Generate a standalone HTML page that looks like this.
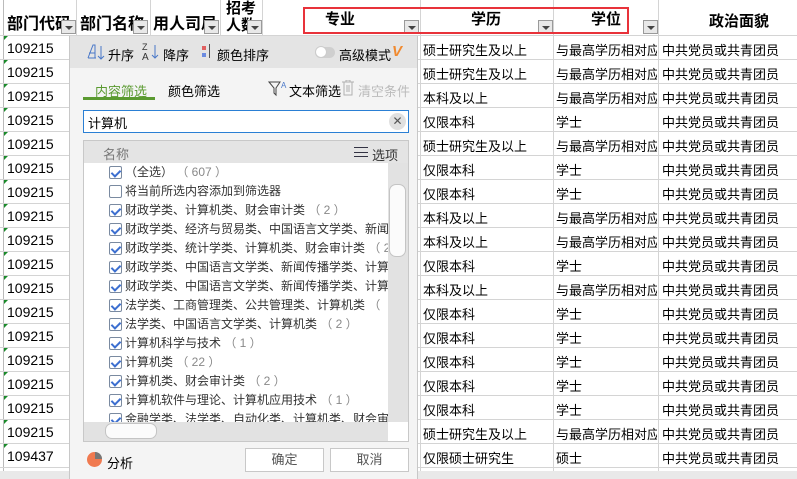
<!DOCTYPE html>
<html><head><meta charset="utf-8"><style>
*{margin:0;padding:0;box-sizing:border-box}
body{width:797px;height:479px;overflow:hidden;background:#fff;position:relative;font-family:"Liberation Sans","Noto Sans CJK SC",sans-serif;font-size:13px;color:#000}
.a{position:absolute;white-space:nowrap}
.vl{position:absolute;top:0;width:1px;height:471px;background:#d4d4d4}
.hl{position:absolute;left:0;width:797px;height:1px;background:#d4d4d4}
.hd{position:absolute;font-weight:bold;font-size:15px;top:9px}
.dd{position:absolute;width:15px;height:14px;background:#e8e8e8;border:1px solid #9a9a9a;top:20px}
.dd:after{content:"";position:absolute;left:3px;top:5px;border:4px solid transparent;border-top:4px solid #444;border-bottom:0}
.c{font-size:13px}
.cb{position:absolute;left:109px;width:13px;height:13px;border:1px solid #7a8aa0;background:#fff;border-radius:2px}
.cb.k:after{content:"";position:absolute;left:3px;top:1px;width:4px;height:7px;border:solid #3c6fd0;border-width:0 2px 2px 0;transform:rotate(45deg)}
.it{position:absolute;left:125px;font-size:12px;color:#333;white-space:nowrap}
.it span{color:#888}
.g{position:absolute;left:4px;width:0;height:0;border-top:4px solid #1a8a2a;border-right:4px solid transparent}
</style></head><body>
<div class="vl" style="left:3px;background:#bbb"></div>
<div class="vl" style="left:76px"></div><div class="vl" style="left:150px"></div><div class="vl" style="left:220px"></div><div class="vl" style="left:262px"></div><div class="vl" style="left:420px"></div><div class="vl" style="left:553px"></div><div class="vl" style="left:658px"></div>
<div id="rows"></div>
<div class="hd" style="left:7px;top:10px;font-size:16px;width:68px;overflow:hidden">部门代码</div>
<div class="hd" style="left:80px;top:10px;font-size:16px;width:68px;overflow:hidden">部门名称</div>
<div class="hd" style="left:153px;top:10px;font-size:16px;width:66px;overflow:hidden">用人司局</div>
<div class="hd" style="left:226px;top:0px;font-size:15px;line-height:17px;width:34px;overflow:hidden;height:35px">招考<br>人数</div>
<div class="hd" style="left:325px;top:8px">专业</div>
<div class="hd" style="left:471px;top:8px">学历</div>
<div class="hd" style="left:591px;top:8px">学位</div>
<div class="hd" style="left:709px;top:10px">政治面貌</div>
<div class="dd" style="left:61px"></div><div class="dd" style="left:133px"></div><div class="dd" style="left:204px"></div><div class="dd" style="left:247px"></div><div class="dd" style="left:404px"></div><div class="dd" style="left:538px"></div><div class="dd" style="left:643px"></div>
<div class="a" style="left:303px;top:7px;width:326px;height:27px;border:2px solid #e8323a"></div>
<div class="a" style="left:0;top:471px;width:797px;height:8px;background:#e9e9e9"></div>
<div class="a" style="left:69px;top:36px;width:349px;height:443px;background:#f4f4f4;border-left:1px solid #c8c8c8;border-right:1px solid #c8c8c8"></div>
<div class="a" style="left:70px;top:36px;width:347px;height:32px;background:#e4e4e4"></div>
<svg class="a" style="left:87px;top:43px" width="20" height="18"><path d="M1 15 L6 2 L8 2 L8 15 M2 10 H8 M1 15 H9" stroke="#4a78c8" fill="none"/><path d="M14 3 V16 M11 13 L14 16 L17 13" stroke="#4a78c8" fill="none"/></svg>
<div class="a" style="left:108px;top:45px">升序</div>
<svg class="a" style="left:142px;top:41px" width="20" height="20"><text x="0" y="9" font-size="9" font-family="Liberation Sans" fill="#333">Z</text><text x="0" y="19" font-size="10" font-family="Liberation Sans" fill="#333">A</text><path d="M13 4 V17 M10 14 L13 17 L16 14" stroke="#4a78c8" fill="none"/></svg>
<div class="a" style="left:163px;top:45px">降序</div>
<div class="a" style="left:202px;top:46px;width:4px;height:4px;background:#e06060"></div><div class="a" style="left:202px;top:53px;width:4px;height:4px;background:#6b8be0"></div><div class="a" style="left:209px;top:44px;width:1px;height:14px;background:#555"></div>
<div class="a" style="left:217px;top:45px">颜色排序</div>
<div class="a" style="left:315px;top:47px;width:20px;height:11px;background:#cfcfcf;border-radius:6px"></div><div class="a" style="left:315px;top:46px;width:12px;height:12px;background:#fff;border-radius:50%;border:1px solid #ccc"></div>
<div class="a" style="left:339px;top:45px">高级模式</div>
<div class="a" style="left:392px;top:43px;color:#f08a30;font-weight:bold;font-style:italic;font-size:15px">V</div>
<div class="a" style="left:95px;top:81px;color:#5a9a30">内容筛选</div>
<div class="a" style="left:83px;top:97px;width:72px;height:3px;background:#5a9a30"></div>
<div class="a" style="left:168px;top:81px">颜色筛选</div>
<svg class="a" style="left:268px;top:79px" width="20" height="18"><path d="M1 3 H12 L8 9 V16 L6 14 V9 Z" stroke="#444" fill="none"/><text x="13" y="9" font-size="8" fill="#4a78c8" font-family="Liberation Sans">A</text></svg>
<div class="a" style="left:289px;top:81px">文本筛选</div>
<svg class="a" style="left:342px;top:80px" width="12" height="16"><path d="M0 2 H12 M4 2 V0 H8 V2 M2 2 V15 H10 V2 M5 5 V12 M7 5 V12" stroke="#b0b0b0" fill="none"/></svg>
<div class="a" style="left:358px;top:81px;color:#bbb">清空条件</div>
<div class="a" style="left:83px;top:110px;width:326px;height:23px;background:#fff;border:1px solid #2a7fd4"></div>
<div class="a" style="left:88px;top:113px;font-size:13px">计算机</div>
<div class="a" style="left:389px;top:113px;width:17px;height:17px;border-radius:50%;background:#e0e0e0;color:#555;font-size:12px;text-align:center;line-height:17px">✕</div>
<div class="a" style="left:83px;top:140px;width:326px;height:302px;background:#fff;border:1px solid #c8c8c8"></div>
<div class="a" style="left:84px;top:141px;width:324px;height:22px;background:#e4e4e4"></div>
<div class="a" style="left:103px;top:144px;color:#777">名称</div>
<div class="a" style="left:354px;top:147px;width:14px;height:10px;border-top:1px solid #334;border-bottom:1px solid #334"></div><div class="a" style="left:354px;top:152px;width:14px;height:1px;background:#334"></div>
<div class="a" style="left:372px;top:145px;color:#333">选项</div>
<div class="a" style="left:388px;top:163px;width:20px;height:259px;background:#e2e2e2"></div>
<div class="a" style="left:389px;top:184px;width:17px;height:73px;background:#fbfbfb;border:1px solid #c4c4c4;border-radius:7px"></div>
<div class="a" style="left:84px;top:422px;width:304px;height:19px;background:#e2e2e2"></div>
<div class="a" style="left:105px;top:423px;width:52px;height:16px;background:#fbfbfb;border:1px solid #c4c4c4;border-radius:7px"></div>
<div id="list"></div>
<div class="a" style="left:87px;top:452px;width:15px;height:15px;border-radius:50%;background:#f07a50"></div>
<div class="a" style="left:95px;top:452px;width:7px;height:7px;background:#777;border-top-right-radius:7px"></div>
<div class="a" style="left:107px;top:453px">分析</div>
<div class="a" style="left:245px;top:448px;width:79px;height:24px;background:#fff;border:1px solid #c8c8c8;text-align:center;line-height:22px;color:#555">确定</div>
<div class="a" style="left:330px;top:448px;width:79px;height:24px;background:#fff;border:1px solid #c8c8c8;text-align:center;line-height:22px;color:#555">取消</div>
<script>
var F=["硕士研究生及以上","硕士研究生及以上","本科及以上","仅限本科","硕士研究生及以上","仅限本科","仅限本科","本科及以上","本科及以上","仅限本科","本科及以上","仅限本科","仅限本科","仅限本科","仅限本科","仅限本科","硕士研究生及以上","仅限硕士研究生"];
var h="";
for(var i=0;i<18;i++){var y=35+i*24;var code=i==17?"109437":"109215";
var G=F[i].indexOf("硕士研究生及")==0||F[i]=="本科及以上"?"与最高学历相对应":(F[i]=="仅限硕士研究生"?"硕士":"学士");
h+='<div class="hl" style="top:'+y+'px"></div><div class="g" style="top:'+(y+1)+'px"></div>';
h+='<div class="a c" style="left:7px;top:'+(y+5)+'px;font-size:14px">'+code+'</div>';
h+='<div class="a c" style="left:423px;top:'+(y+5)+'px">'+F[i]+'</div>';
h+='<div class="a c" style="left:556px;top:'+(y+5)+'px;width:101px;overflow:hidden">'+G+'</div>';
h+='<div class="a c" style="left:662px;top:'+(y+5)+'px">中共党员或共青团员</div>';}
h+='<div class="hl" style="top:467px"></div>';
document.getElementById("rows").innerHTML=h;
var L=[["（全选）","（ 607 ）"],["将当前所选内容添加到筛选器",""],["财政学类、计算机类、财会审计类","（ 2 ）"],["财政学类、经济与贸易类、中国语言文学类、新闻",""],["财政学类、统计学类、计算机类、财会审计类","（ 2"],["财政学类、中国语言文学类、新闻传播学类、计算",""],["财政学类、中国语言文学类、新闻传播学类、计算",""],["法学类、工商管理类、公共管理类、计算机类","（"],["法学类、中国语言文学类、计算机类","（ 2 ）"],["计算机科学与技术","（ 1 ）"],["计算机类","（ 22 ）"],["计算机类、财会审计类","（ 2 ）"],["计算机软件与理论、计算机应用技术","（ 1 ）"],["金融学类、法学类、自动化类、计算机类、财会审",""]];
var s="";
for(var j=0;j<L.length;j++){var y=163+j*19;
s+='<div class="a" style="left:84px;top:'+y+'px;width:304px;height:'+Math.min(19,422-y)+'px;overflow:hidden"><div class="cb'+(j==1?'':' k')+'" style="left:25px;top:3px"></div><div class="it" style="left:41px;top:0;line-height:19px">'+L[j][0]+' <span>'+L[j][1]+'</span></div></div>';}
document.getElementById("list").innerHTML=s;
</script>
</body></html>
